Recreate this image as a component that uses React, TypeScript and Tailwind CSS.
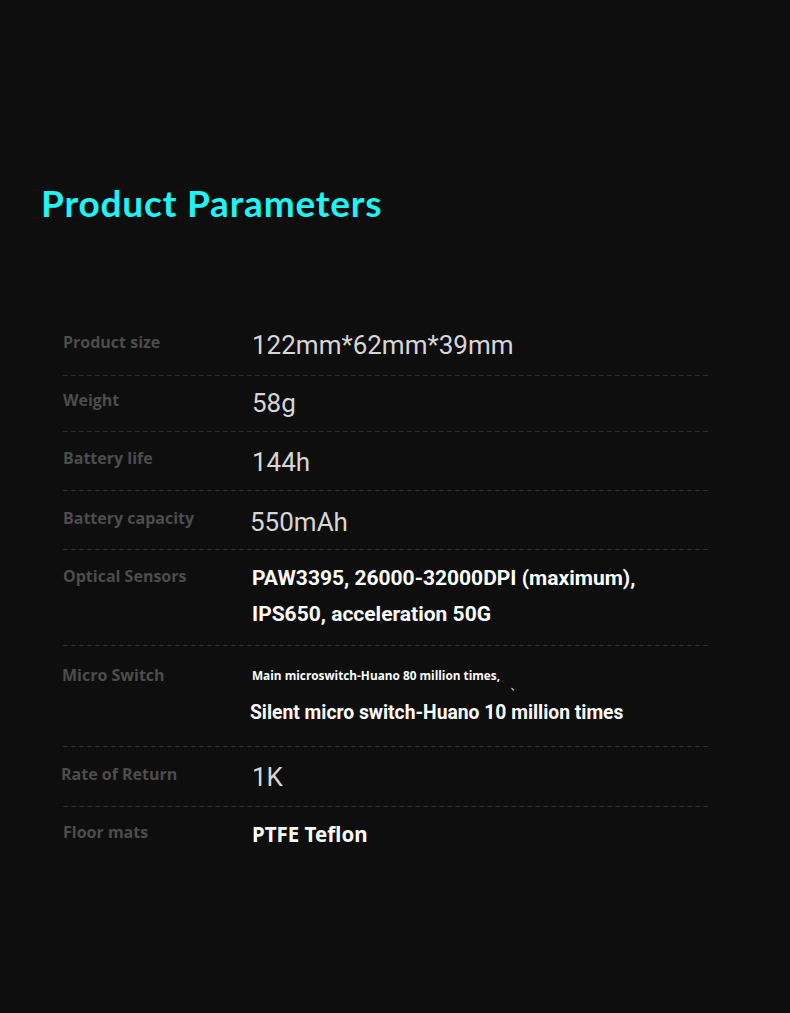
import React from "react";

const Dash = () => (
  <div className="h-px w-full bg-[linear-gradient(to_right,#2e2e2e_5px,transparent_5px)] bg-[length:8px_1px] bg-repeat-x" />
);

const labelCls =
  "w-[189px] shrink-0 font-['Open_Sans',sans-serif] font-bold text-[16px] leading-[20px] text-[#4c4c4c]";
const lightVal =
  "font-['Roboto',sans-serif] text-[26px] leading-[30px] text-[#d6d6d6]";
const boldVal =
  "font-['Roboto',sans-serif] font-bold leading-[24px] text-white";

export default function App() {
  return (
    <div className="w-[790px] h-[1013px] bg-[#0e0e0e] overflow-hidden">
      <div className="pt-[180px] pl-[41px]">
        <h1 className="font-['Lato',sans-serif] font-bold text-[37px] leading-[46px] text-[#1ff3f4] tracking-[0.8px]">
          Product Parameters
        </h1>
      </div>
      <div className="mt-[93px] ml-[63px] w-[646px]">
        {/* Row 1 */}
        <div className="flex h-[56px] pt-[13px]">
          <div className={labelCls}>Product size</div>
          <div className={`${lightVal} -mt-[2px]`}>122mm*62mm*39mm</div>
        </div>
        <Dash />
        {/* Row 2 */}
        <div className="flex h-[55px] pt-[14px]">
          <div className={`${labelCls} text-[12.5px]`}>Weight</div>
          <div className={`${lightVal} -mt-[2px]`}>58g</div>
        </div>
        <Dash />
        {/* Row 3 */}
        <div className="flex h-[58px] pt-[16px]">
          <div className={labelCls}>Battery life</div>
          <div className={`${lightVal} mt-[-1px]`}>144h</div>
        </div>
        <Dash />
        {/* Row 4 */}
        <div className="flex h-[58px] pt-[17px]">
          <div className={labelCls}>Battery capacity</div>
          <div className={`${lightVal} -mt-[1px] -ml-[2px]`}>550mAh</div>
        </div>
        <Dash />
        {/* Row 5 */}
        <div className="flex h-[95px] pt-[16px]">
          <div className={labelCls}>Optical Sensors</div>
          <div className={`${boldVal} text-[21px] flex flex-col gap-[12px]`}>
            <span>PAW3395, 26000-32000DPI (maximum),</span>
            <span>IPS650, acceleration 50G</span>
          </div>
        </div>
        <Dash />
        {/* Row 6 */}
        <div className="flex h-[100px] pt-[21px]">
          <div className={`${labelCls} -ml-[1px] mr-[1px] -mt-[2px]`}>Micro Switch</div>
          <div className="relative flex flex-col">
            <span className="font-['Open_Sans',sans-serif] font-bold text-[11.8px] leading-[16px] text-white">
              Main microswitch-Huano 80 million times,
            </span>
            <span className="absolute left-[258px] top-[9px] text-[#cfcfcf] text-[12px] font-bold">、</span>
            <span className={`${boldVal} text-[19.3px] mt-[18px] -ml-[2px]`}>
              Silent micro switch-Huano 10 million times
            </span>
          </div>
        </div>
        <Dash />
        {/* Row 7 */}
        <div className="flex h-[59px] pt-[17px]">
          <div className={`${labelCls} -ml-[2px] mr-[2px]`}>Rate of Return</div>
          <div className={`${lightVal} -mt-[2px]`}>1K</div>
        </div>
        <Dash />
        {/* Row 8 */}
        <div className="flex h-[60px] pt-[15px]">
          <div className={labelCls}>Floor mats</div>
          <div className="font-['Noto_Sans',sans-serif] font-bold text-[20.5px] leading-[24px] text-white">
            PTFE Teflon
          </div>
        </div>
      </div>
    </div>
  );
}
